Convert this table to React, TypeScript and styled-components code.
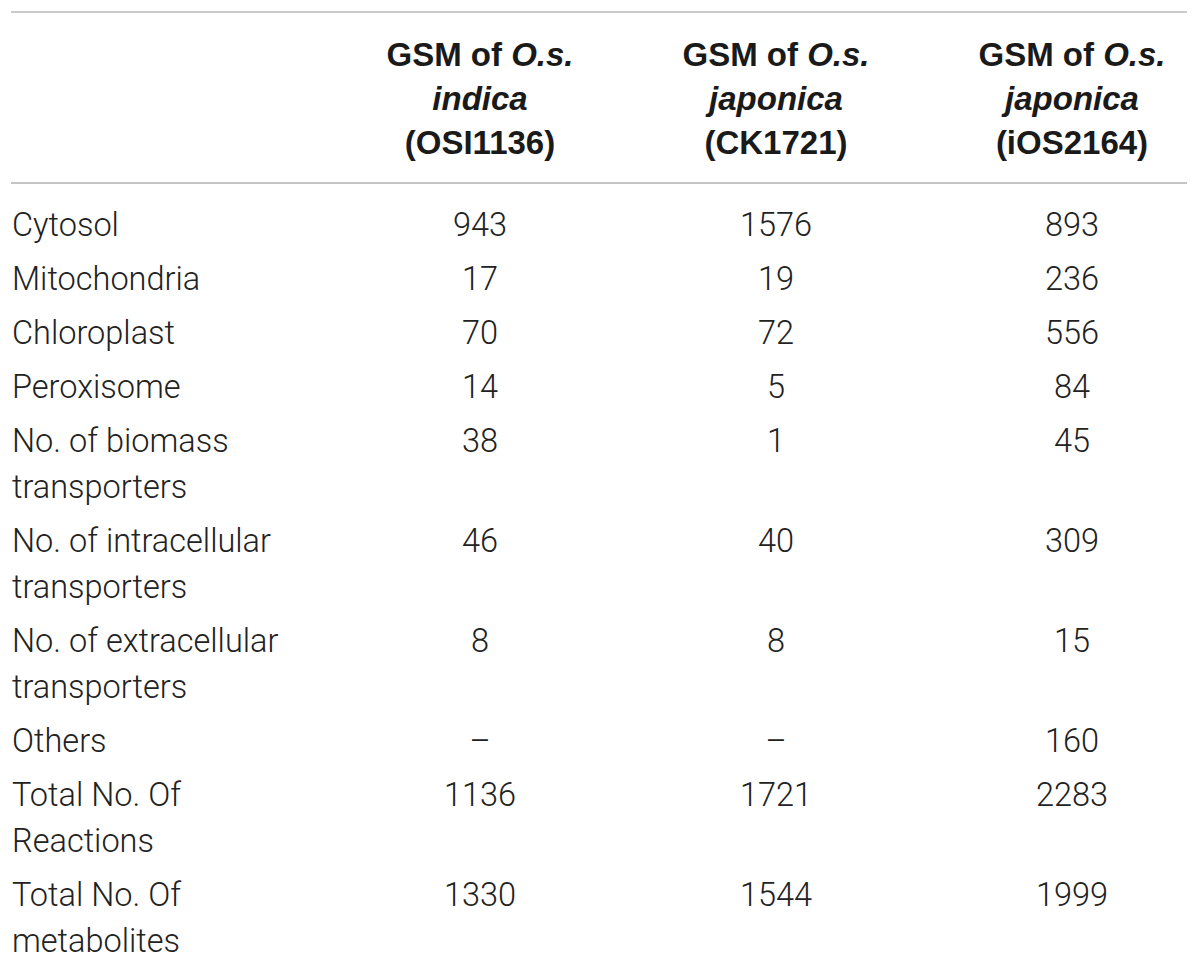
import React from 'react'
import styled, { createGlobalStyle } from 'styled-components'

const GlobalStyle = createGlobalStyle`
    html, body {
        margin: 0;
        padding: 0;
        background: #fff;
    }
    body {
        font-family: 'Liberation Sans', Arial, sans-serif;
        color: #1c1c1c;
    }
`

const Page = styled.div`
    width: 1200px;
    padding: 11px 0 0 11px;
    box-sizing: border-box;
`

const Table = styled.div`
    width: 1176px;
    border-top: 2px solid #cbcbcb;
`

const HeadRow = styled.div`
    display: grid;
    grid-template-columns: 321px repeat(3, 296px);
    padding: 20px 0 17px;
    border-bottom: 2px solid #c4c4c4;
    width: 1176px;
`

const HeadCell = styled.div`
    font-weight: 700;
    font-size: 33px;
    line-height: 44px;
    text-align: center;
    color: #1a1a1a;

    i {
        font-style: italic;
    }
`

const Body = styled.div`
    padding: 14px 0 0;
`

const Row = styled.div`
    display: grid;
    grid-template-columns: 321px repeat(3, 296px);
    padding: 4px 0;
    width: 1176px;
`

const Label = styled.div`
    font-family: Roboto, 'Liberation Sans', sans-serif;
    font-weight: 300;
    font-size: 32.5px;
    line-height: 46px;
    color: #222;
    padding-left: 1px;
`

const Value = styled.div`
    font-family: Roboto, 'Liberation Sans', sans-serif;
    font-weight: 300;
    font-size: 32.5px;
    line-height: 46px;
    text-align: center;
    color: #222;
`

type Line = {
    label: React.ReactNode,
    values: [string, string, string],
}

const lines: Line[] = [
    { label: 'Cytosol', values: ['943', '1576', '893'] },
    { label: 'Mitochondria', values: ['17', '19', '236'] },
    { label: 'Chloroplast', values: ['70', '72', '556'] },
    { label: 'Peroxisome', values: ['14', '5', '84'] },
    { label: <>No. of biomass<br />transporters</>, values: ['38', '1', '45'] },
    { label: <>No. of intracellular<br />transporters</>, values: ['46', '40', '309'] },
    { label: <>No. of extracellular<br />transporters</>, values: ['8', '8', '15'] },
    { label: 'Others', values: ['\u2013', '\u2013', '160'] },
    { label: <>Total No. Of<br />Reactions</>, values: ['1136', '1721', '2283'] },
    { label: <>Total No. Of<br />metabolites</>, values: ['1330', '1544', '1999'] },
]

const heads = [
    { variety: 'indica', code: '(OSI1136)' },
    { variety: 'japonica', code: '(CK1721)' },
    { variety: 'japonica', code: '(iOS2164)' },
]

const App: React.FC = () => {
    return (
        <>
            <GlobalStyle />
            <Page>
                <Table>
                    <HeadRow>
                        <HeadCell />
                        {heads.map((h, i) => (
                            <HeadCell key={i}>
                                GSM of <i>O.s.</i><br />
                                <i>{h.variety}</i><br />
                                {h.code}
                            </HeadCell>
                        ))}
                    </HeadRow>
                    <Body>
                        {lines.map((l, i) => (
                            <Row key={i}>
                                <Label>{l.label}</Label>
                                {l.values.map((v, j) => (
                                    <Value key={j}>{v}</Value>
                                ))}
                            </Row>
                        ))}
                    </Body>
                </Table>
            </Page>
        </>
    )
}

export default App
